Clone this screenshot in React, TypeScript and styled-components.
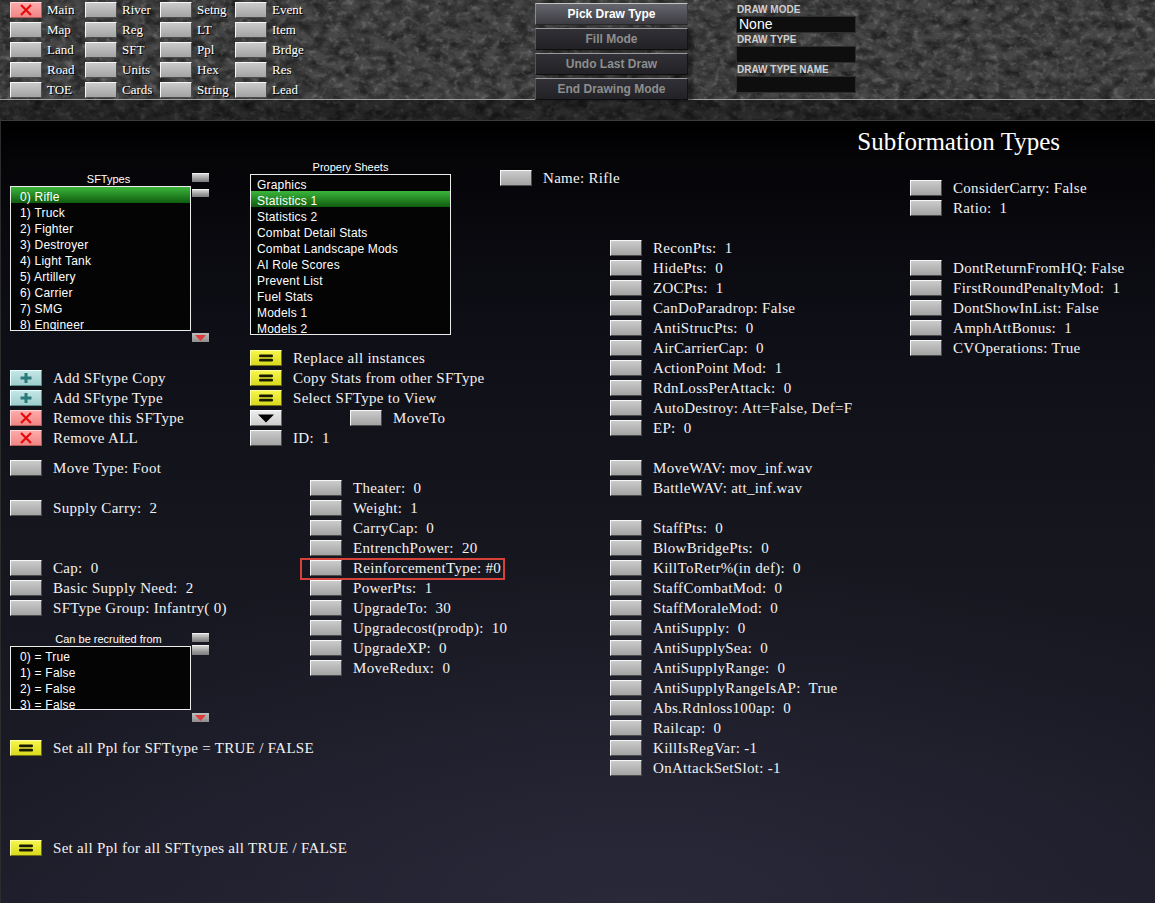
import React from 'react';
import styled, { createGlobalStyle, css } from 'styled-components';

type Variant = 'gray' | 'red' | 'plus' | 'yellow' | 'drop';

interface Stat {
  label: string;
  mt?: number;
  boxed?: boolean;
}

const navItems: { label: string; variant: Variant }[] = [
  'Main', 'River', 'Setng', 'Event',
  'Map', 'Reg', 'LT', 'Item',
  'Land', 'SFT', 'Ppl', 'Brdge',
  'Road', 'Units', 'Hex', 'Res',
  'TOE', 'Cards', 'String', 'Lead',
].map((label) => ({ label, variant: label === 'Main' ? 'red' : 'gray' }));

const sfTypes = [
  '0) Rifle', '1) Truck', '2) Fighter', '3) Destroyer', '4) Light Tank',
  '5) Artillery', '6) Carrier', '7) SMG', '8) Engineer',
];

const sheets = [
  'Graphics', 'Statistics 1', 'Statistics 2', 'Combat Detail Stats',
  'Combat Landscape Mods', 'AI Role Scores', 'Prevent List', 'Fuel Stats',
  'Models 1', 'Models 2',
];

const recruits = ['0) = True', '1) = False', '2) = False', '3) = False'];

const middleStats: Stat[] = [
  { label: 'Theater:  0', mt: 30 },
  { label: 'Weight:  1' },
  { label: 'CarryCap:  0' },
  { label: 'EntrenchPower:  20' },
  { label: 'ReinforcementType: #0', boxed: true },
  { label: 'PowerPts:  1' },
  { label: 'UpgradeTo:  30' },
  { label: 'Upgradecost(prodp):  10' },
  { label: 'UpgradeXP:  0' },
  { label: 'MoveRedux:  0' },
];

const rightStats: Stat[] = [
  { label: 'ReconPts:  1', mt: 78 },
  { label: 'HidePts:  0' },
  { label: 'ZOCPts:  1' },
  { label: 'CanDoParadrop: False' },
  { label: 'AntiStrucPts:  0' },
  { label: 'AirCarrierCap:  0' },
  { label: 'ActionPoint Mod:  1' },
  { label: 'RdnLossPerAttack:  0' },
  { label: 'AutoDestroy: Att=False, Def=F' },
  { label: 'EP:  0' },
  { label: 'MoveWAV: mov_inf.wav', mt: 20 },
  { label: 'BattleWAV: att_inf.wav' },
  { label: 'StaffPts:  0', mt: 20 },
  { label: 'BlowBridgePts:  0' },
  { label: 'KillToRetr%(in def):  0' },
  { label: 'StaffCombatMod:  0' },
  { label: 'StaffMoraleMod:  0' },
  { label: 'AntiSupply:  0' },
  { label: 'AntiSupplySea:  0' },
  { label: 'AntiSupplyRange:  0' },
  { label: 'AntiSupplyRangeIsAP:  True' },
  { label: 'Abs.Rdnloss100ap:  0' },
  { label: 'Railcap:  0' },
  { label: 'KillIsRegVar: -1' },
  { label: 'OnAttackSetSlot: -1' },
];

const farStats: Stat[] = [
  { label: 'ConsiderCarry: False', mt: 18 },
  { label: 'Ratio:  1' },
  { label: 'DontReturnFromHQ: False', mt: 40 },
  { label: 'FirstRoundPenaltyMod:  1' },
  { label: 'DontShowInList: False' },
  { label: 'AmphAttBonus:  1' },
  { label: 'CVOperations: True' },
];

const GlobalStyle = createGlobalStyle`
  html, body {
    margin: 0;
    padding: 0;
    background: #000;
  }
  body {
    width: 1155px;
    height: 903px;
    overflow: hidden;
    font-family: "Liberation Serif", "Times New Roman", serif;
  }
`;

const skins: Record<Variant, ReturnType<typeof css>> = {
  gray: css`
    background: linear-gradient(#cbcbcb, #a3a3a3);
    border-color: #f6f6f6 #4c4c4c #4c4c4c #f6f6f6;
  `,
  red: css`
    background: linear-gradient(#ffaaaa, #f08686);
    border-color: #ffd6d6 #b05a5a #b05a5a #ffd6d6;
  `,
  plus: css`
    background: linear-gradient(#c4e6e6, #9fcdcd);
    border-color: #e6ffff #5c8c8c #5c8c8c #e6ffff;
  `,
  yellow: css`
    background: linear-gradient(#f6f64c, #d9d91e);
    border-color: #fcfca4 #707010 #707010 #fcfca4;
  `,
  drop: css`
    background: linear-gradient(#ececec, #cdcdcd);
    border-color: #ffffff #6a6a6a #6a6a6a #ffffff;
  `,
};

const Btn = styled.div<{ $variant: Variant }>`
  width: 32px;
  height: 16px;
  box-sizing: border-box;
  border: 1px solid;
  flex-shrink: 0;
  display: flex;
  align-items: center;
  justify-content: center;
  ${({ $variant }) => skins[$variant]}
`;

const Chrome = styled.header`
  position: relative;
  height: 120px;
  overflow: hidden;
  background: #474747;
`;

const TextureSvg = styled.svg`
  position: absolute;
  left: 0;
  top: 0;
  width: 100%;
  height: 100%;
  z-index: 0;
`;

const Toolbar = styled.div`
  position: relative;
  z-index: 1;
  height: 100px;
  box-sizing: border-box;
  border-bottom: 1px solid #a0a0a0;
  display: flex;
`;

const Strip = styled.div`
  position: relative;
  z-index: 1;
  height: 20px;
  background: rgba(0, 0, 0, 0.4);
`;

const NavGrid = styled.div`
  padding-left: 10px;
  display: grid;
  grid-template-columns: repeat(4, 75px);
  grid-auto-rows: 20px;
`;

const NavCell = styled.div`
  display: flex;
  align-items: center;
  gap: 5px;
  font-size: 13px;
  color: #fff;
  text-shadow: 1px 1px 0 #000;
`;

const DrawCol = styled.div`
  margin-left: 225px;
  padding-top: 3px;
  width: 153px;
  display: flex;
  flex-direction: column;
  gap: 3px;
`;

const DrawButton = styled.div<{ $active?: boolean }>`
  height: 22px;
  box-sizing: border-box;
  text-align: center;
  font: bold 12px "Liberation Sans", Arial, sans-serif;
  line-height: 20px;
  ${({ $active }) =>
    $active
      ? css`
          color: #fff;
          background: linear-gradient(#66666e, #3c3c42);
          border: 1px solid;
          border-color: #c4c4c4 #3a3a3a #262626 #8a8a8a;
        `
      : css`
          color: #8e8e8e;
          background: linear-gradient(#303036, #222226);
          border: 1px solid;
          border-color: #9a9a9a #141414 #0e0e0e #555;
          box-shadow: 5px 1px 3px rgba(0, 0, 0, 0.45);
        `}
`;

const InfoCol = styled.div`
  margin-left: 48px;
  padding-top: 4px;
  width: 120px;
  display: flex;
  flex-direction: column;
`;

const InfoLabel = styled.div`
  font: bold 10px "Liberation Sans", Arial, sans-serif;
  color: #d0d0d0;
  line-height: 12px;
  height: 12px;
  padding-left: 1px;
`;

const InfoBox = styled.div`
  height: 17px;
  box-sizing: border-box;
  margin-bottom: 1px;
  background: #0e0e0e;
  border: 1px solid #2e2e2e;
  color: #fff;
  font: 14px "Liberation Sans", Arial, sans-serif;
  line-height: 15px;
  padding-left: 2px;
`;

const Panel = styled.main`
  height: 783px;
  box-sizing: border-box;
  border-top: 1px solid #3c3c3c;
  border-left: 1px solid #2c2c2c;
  background:
    radial-gradient(ellipse 70% 45% at 55% 100%, rgba(52, 52, 72, 0.55), rgba(0, 0, 0, 0) 100%),
    linear-gradient(180deg, #000 0px, #050508 40px, #0e0e16 200px, #16161f 420px, #1b1b28 783px);
`;

const Header = styled.div`
  height: 39px;
  box-sizing: border-box;
  padding: 3px 95px 0 0;
  display: flex;
  justify-content: flex-end;
  align-items: center;
`;

const Title = styled.h1`
  margin: 0;
  font: normal 25px "Liberation Serif", "Times New Roman", serif;
  line-height: 30px;
  color: #fff;
`;

const Body = styled.div`
  display: flex;
  padding-left: 9px;
`;

const Column = styled.div<{ $w?: number }>`
  display: flex;
  flex-direction: column;
  align-items: flex-start;
  ${({ $w }) => ($w ? `width: ${$w}px; flex-shrink: 0;` : 'flex: 1;')}
`;

const Row = styled.div<{ $mt?: number; $indent?: number; $boxed?: boolean }>`
  position: relative;
  height: 20px;
  display: flex;
  align-items: center;
  gap: 11px;
  white-space: nowrap;
  margin-top: ${({ $mt }) => $mt ?? 0}px;
  padding-left: ${({ $indent }) => $indent ?? 0}px;
  ${({ $boxed, $indent }) =>
    $boxed &&
    css`
      &::after {
        content: '';
        position: absolute;
        left: ${($indent ?? 0) - 10}px;
        right: -4px;
        top: 0;
        bottom: -2px;
        border: 2px solid #d8413a;
        pointer-events: none;
      }
    `}
`;

const MoveGroup = styled.div`
  margin-left: 57px;
  display: flex;
  align-items: center;
  gap: 11px;
`;

const Label = styled.span`
  font-size: 15px;
  letter-spacing: 0.3px;
  color: #f3f3f3;
  white-space: pre;
`;

const ListBlock = styled.div<{ $mt?: number }>`
  display: flex;
  align-items: flex-start;
  gap: 1px;
  margin-top: ${({ $mt }) => $mt ?? 0}px;
`;

const ListMain = styled.div`
  display: flex;
  flex-direction: column;
`;

const ListTitle = styled.div<{ $shift?: number }>`
  height: 13px;
  text-align: center;
  font: 11px "Liberation Sans", Arial, sans-serif;
  line-height: 13px;
  color: #fff;
  padding-left: ${({ $shift }) => $shift ?? 0}px;
`;

const ListBox = styled.div<{ $w: number; $h: number }>`
  width: ${({ $w }) => $w}px;
  height: ${({ $h }) => $h}px;
  box-sizing: border-box;
  border: 1px solid #ececec;
  background: #040405;
  overflow: hidden;
`;

const ListItem = styled.div<{ $pad: number; $selected?: boolean }>`
  height: 14px;
  padding-top: 2px;
  font: 12px "Liberation Sans", Arial, sans-serif;
  line-height: 16px;
  letter-spacing: 0.2px;
  color: #fff;
  white-space: pre;
  padding-left: ${({ $pad }) => $pad}px;
  ${({ $selected }) =>
    $selected &&
    css`
      background: linear-gradient(#3bb53b, #0f5c0f);
    `}
`;

const Scroll = styled.div<{ $h: number }>`
  width: 17px;
  height: ${({ $h }) => $h}px;
  display: flex;
  flex-direction: column;
`;

const ScrollBtn = styled.div<{ $mt?: number; $h: number }>`
  height: ${({ $h }) => $h}px;
  margin-top: ${({ $mt }) => $mt ?? 0}px;
  box-sizing: border-box;
  background: linear-gradient(#d6d6d6, #9a9a9a 60%, #7c7c7c);
  border-top: 1px solid #f0f0f0;
`;

const ScrollSpacer = styled.div`
  flex: 1;
`;

const ScrollDown = styled.div`
  height: 9px;
  background: linear-gradient(#bdbdbd, #8e8e8e);
  display: flex;
  align-items: center;
  justify-content: center;
`;

const XMark = () => (
  <svg width="14" height="12" viewBox="0 0 14 12">
    <path d="M2 1 L12 11 M12 1 L2 11" stroke="#e40c0c" strokeWidth="2.2" />
  </svg>
);

const PlusMark = () => (
  <svg width="14" height="12" viewBox="0 0 14 12">
    <path d="M7 1 V11 M1.5 6 H12.5" stroke="#2c7b7c" strokeWidth="3" />
  </svg>
);

const EqualsMark = () => (
  <svg width="16" height="8" viewBox="0 0 16 8">
    <rect x="1" y="0.5" width="14" height="2.8" rx="1.2" fill="#1a1a00" />
    <rect x="1" y="4.7" width="14" height="2.8" rx="1.2" fill="#1a1a00" />
  </svg>
);

const DownMark = () => (
  <svg width="18" height="9" viewBox="0 0 18 9">
    <path d="M1 0.5 H17 L9 8.5 Z" fill="#000" />
  </svg>
);

const RedArrow = () => (
  <svg width="11" height="6" viewBox="0 0 11 6">
    <path d="M0 0 H11 L5.5 6 Z" fill="#e03a3a" />
  </svg>
);

const iconFor: Partial<Record<Variant, React.ReactNode>> = {
  red: <XMark />,
  plus: <PlusMark />,
  yellow: <EqualsMark />,
  drop: <DownMark />,
};

function Button({ variant = 'gray' }: { variant?: Variant }) {
  return <Btn $variant={variant}>{iconFor[variant]}</Btn>;
}

// stone texture: dark and light speckle layers drawn as alpha over the grey base
function Stone() {
  return (
    <TextureSvg aria-hidden="true">
      <filter id="stoneDark" x="0" y="0" width="100%" height="100%">
        <feTurbulence type="fractalNoise" baseFrequency="0.07 0.1" numOctaves="4" seed="7" />
        <feColorMatrix
          type="matrix"
          values="0 0 0 0 0  0 0 0 0 0  0 0 0 0 0  1.1 0 0 0 -0.36"
        />
      </filter>
      <filter id="stoneLight" x="0" y="0" width="100%" height="100%">
        <feTurbulence type="fractalNoise" baseFrequency="0.15 0.18" numOctaves="3" seed="21" />
        <feColorMatrix
          type="matrix"
          values="0 0 0 0 1  0 0 0 0 1  0 0 0 0 1  0 0.5 0 0 -0.26"
        />
      </filter>
      <rect width="100%" height="100%" filter="url(#stoneDark)" />
      <rect width="100%" height="100%" filter="url(#stoneLight)" />
    </TextureSvg>
  );
}

function StatColumn({ stats, indent }: { stats: Stat[]; indent?: number }) {
  return (
    <>
      {stats.map((s) => (
        <Row key={s.label} $mt={s.mt} $indent={indent} $boxed={s.boxed}>
          <Button />
          <Label>{s.label}</Label>
        </Row>
      ))}
    </>
  );
}

export default function App() {
  return (
    <>
      <GlobalStyle />
      <Chrome>
        <Stone />
        <Toolbar>
          <NavGrid>
            {navItems.map((n) => (
              <NavCell key={n.label}>
                <Button variant={n.variant} />
                {n.label}
              </NavCell>
            ))}
          </NavGrid>
          <DrawCol>
            <DrawButton $active>Pick Draw Type</DrawButton>
            <DrawButton>Fill Mode</DrawButton>
            <DrawButton>Undo Last Draw</DrawButton>
            <DrawButton>End Drawing Mode</DrawButton>
          </DrawCol>
          <InfoCol>
            <InfoLabel>DRAW MODE</InfoLabel>
            <InfoBox>None</InfoBox>
            <InfoLabel>DRAW TYPE</InfoLabel>
            <InfoBox />
            <InfoLabel>DRAW TYPE NAME</InfoLabel>
            <InfoBox />
          </InfoCol>
        </Toolbar>
        <Strip />
      </Chrome>

      <Panel>
        <Header>
          <Title>Subformation Types</Title>
        </Header>
        <Body>
          <Column $w={240}>
            <ListBlock $mt={13}>
              <ListMain>
                <ListTitle $shift={16}>SFTypes</ListTitle>
                <ListBox $w={181} $h={145}>
                  {sfTypes.map((t, i) => (
                    <ListItem key={t} $pad={9} $selected={i === 0}>
                      {t}
                    </ListItem>
                  ))}
                </ListBox>
              </ListMain>
              <Scroll $h={169}>
                <ScrollBtn $h={9} />
                <ScrollBtn $h={8} $mt={7} />
                <ScrollSpacer />
                <ScrollDown>
                  <RedArrow />
                </ScrollDown>
              </Scroll>
            </ListBlock>

            <Row $mt={26}>
              <Button variant="plus" />
              <Label>Add SFtype Copy</Label>
            </Row>
            <Row>
              <Button variant="plus" />
              <Label>Add SFtype Type</Label>
            </Row>
            <Row>
              <Button variant="red" />
              <Label>Remove this SFType</Label>
            </Row>
            <Row>
              <Button variant="red" />
              <Label>Remove ALL</Label>
            </Row>
            <Row $mt={10}>
              <Button />
              <Label>Move Type: Foot</Label>
            </Row>
            <Row $mt={20}>
              <Button />
              <Label>Supply Carry:  2</Label>
            </Row>
            <Row $mt={40}>
              <Button />
              <Label>Cap:  0</Label>
            </Row>
            <Row>
              <Button />
              <Label>Basic Supply Need:  2</Label>
            </Row>
            <Row>
              <Button />
              <Label>SFType Group: Infantry( 0)</Label>
            </Row>

            <ListBlock $mt={15}>
              <ListMain>
                <ListTitle $shift={16}>Can be recruited from</ListTitle>
                <ListBox $w={181} $h={64}>
                  {recruits.map((r) => (
                    <ListItem key={r} $pad={9}>
                      {r}
                    </ListItem>
                  ))}
                </ListBox>
              </ListMain>
              <Scroll $h={89}>
                <ScrollBtn $h={9} />
                <ScrollBtn $h={10} $mt={3} />
                <ScrollSpacer />
                <ScrollDown>
                  <RedArrow />
                </ScrollDown>
              </Scroll>
            </ListBlock>

            <Row $mt={16}>
              <Button variant="yellow" />
              <Label>Set all Ppl for SFTtype = TRUE / FALSE</Label>
            </Row>
            <Row $mt={80}>
              <Button variant="yellow" />
              <Label>Set all Ppl for all SFTtypes all TRUE / FALSE</Label>
            </Row>
          </Column>

          <Column $w={250}>
            <ListBlock $mt={1}>
              <ListMain>
                <ListTitle>Propery Sheets</ListTitle>
                <ListBox $w={201} $h={161}>
                  {sheets.map((s, i) => (
                    <ListItem key={s} $pad={6} $selected={i === 1}>
                      {s}
                    </ListItem>
                  ))}
                </ListBox>
              </ListMain>
            </ListBlock>

            <Row $mt={13}>
              <Button variant="yellow" />
              <Label>Replace all instances</Label>
            </Row>
            <Row>
              <Button variant="yellow" />
              <Label>Copy Stats from other SFType</Label>
            </Row>
            <Row>
              <Button variant="yellow" />
              <Label>Select SFType to View</Label>
            </Row>
            <Row>
              <Button variant="drop" />
              <MoveGroup>
                <Button />
                <Label>MoveTo</Label>
              </MoveGroup>
            </Row>
            <Row>
              <Button />
              <Label>ID:  1</Label>
            </Row>

            <StatColumn stats={middleStats} indent={60} />
          </Column>

          <Column $w={110}>
            <Row $mt={8}>
              <Button />
              <Label>Name: Rifle</Label>
            </Row>
          </Column>

          <Column $w={300}>
            <StatColumn stats={rightStats} />
          </Column>

          <Column>
            <StatColumn stats={farStats} />
          </Column>
        </Body>
      </Panel>
    </>
  );
}
